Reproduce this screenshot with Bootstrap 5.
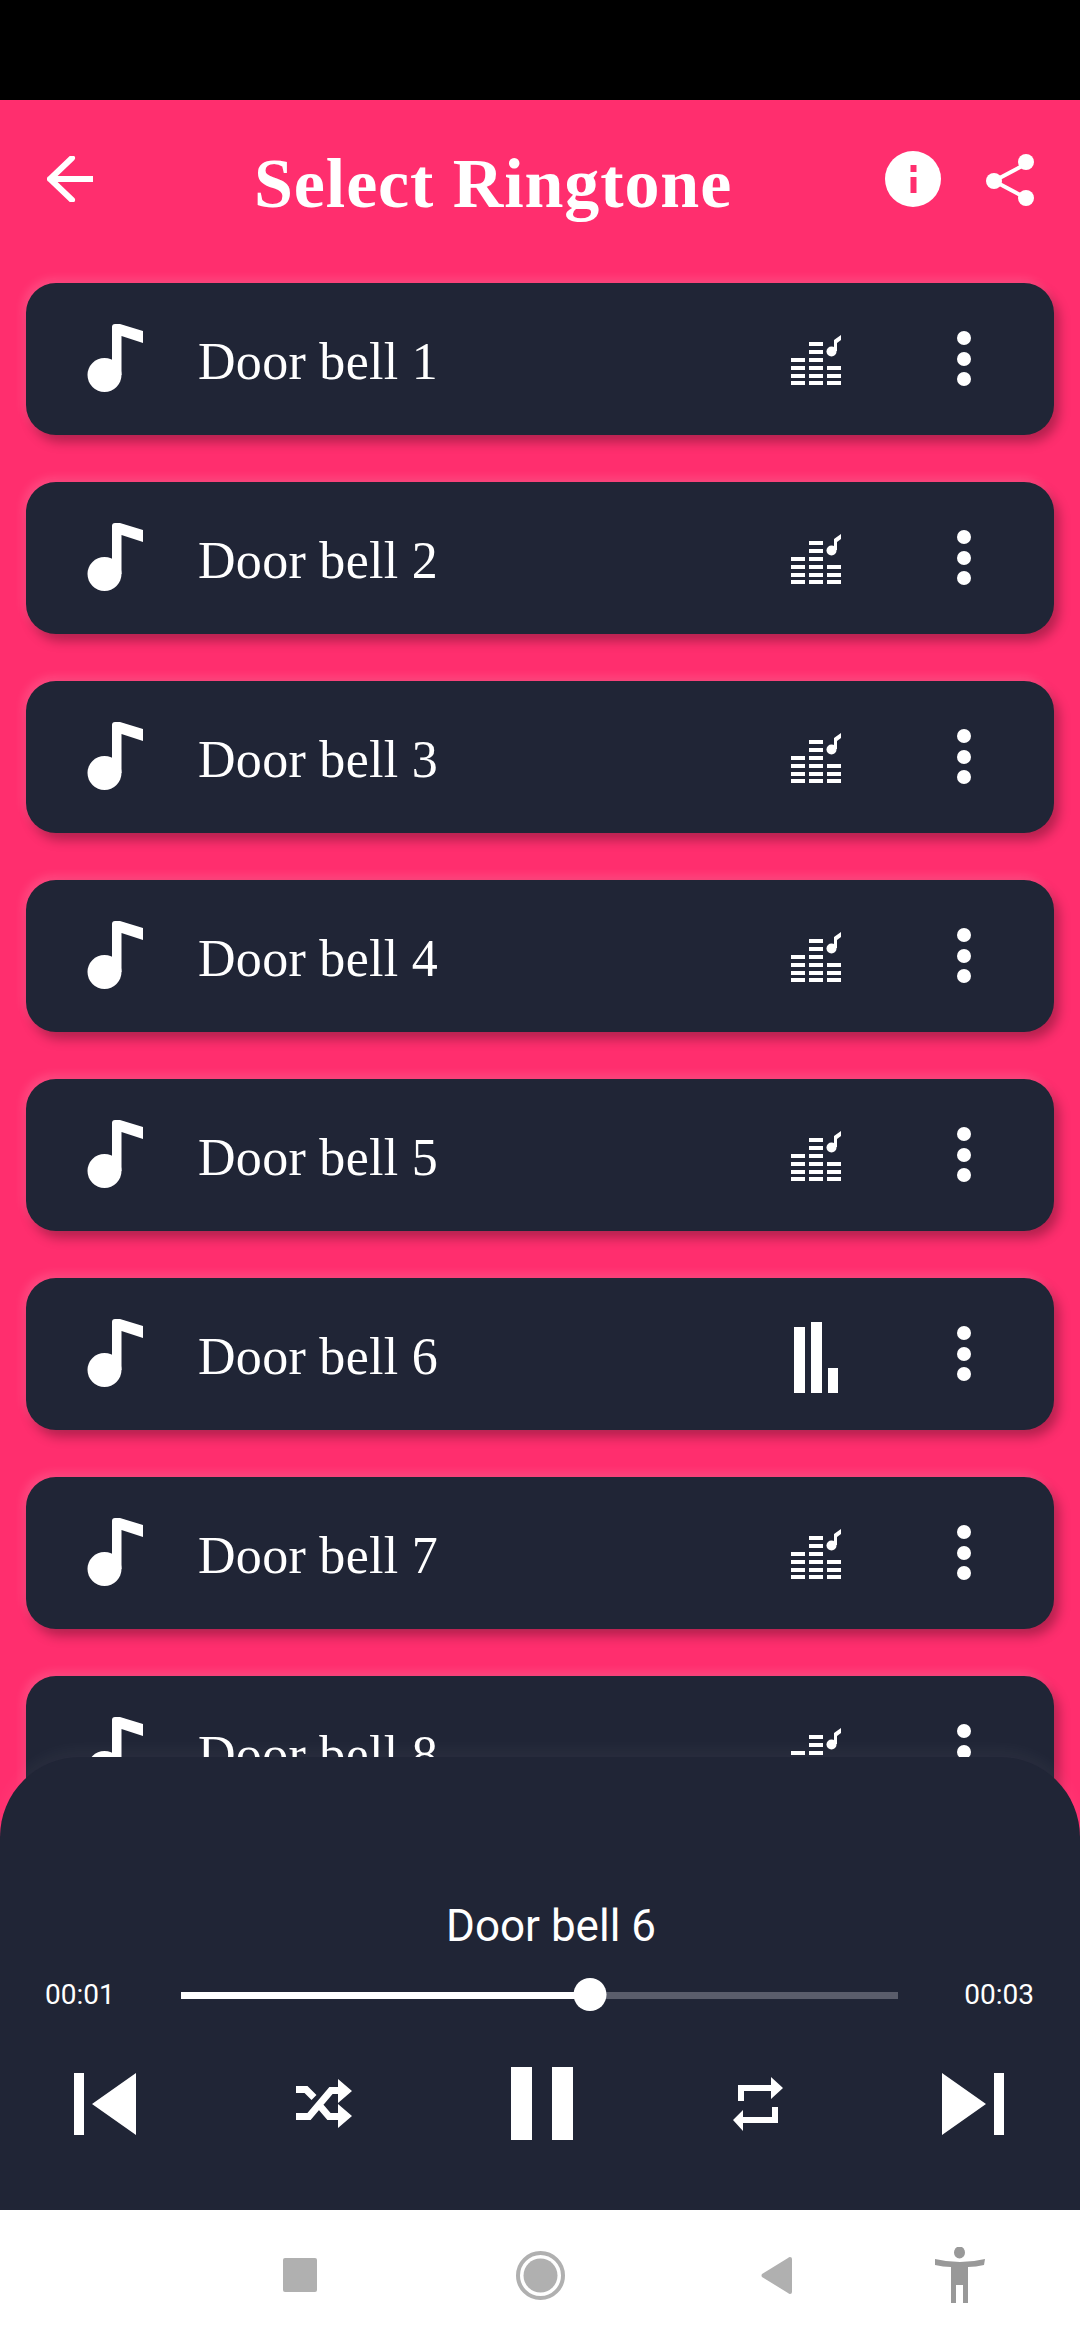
<!DOCTYPE html>
<html lang="en">
<head>
    <meta charset="UTF-8">
    <meta name="viewport" content="width=device-width, initial-scale=1.0">
    <title>Select Ringtone</title>
    <link href="https://cdn.jsdelivr.net/npm/bootstrap@5.3.0/dist/css/bootstrap.min.css" rel="stylesheet">
    <style>
        body { width: 1080px; height: 2340px; background: #000; overflow: hidden; }
        .status-strip { height: 100px; background: #000; }
        .screen { background: #ff2e6e; height: 2110px; overflow: hidden; }
        .app-head { height: 183px; padding: 0 46px 0 47px; }
        .app-title { font-family: "Liberation Serif", serif; font-weight: 700; font-size: 70px; letter-spacing: .9px; color: #fff; margin: 0 0 16px 161px; line-height: 1; width: 476px; flex: none; }
        .head-back, .head-info, .head-share { flex: none; margin-bottom: 25px; }
        .head-info { margin-left: 155px; }
        .head-share { margin-left: 45px; margin-bottom: 23px; }

        .tone-list { gap: 47px; padding: 0 26px; }
        .tone-row { height: 152px; background: #202536; border-radius: 30px; box-shadow: 5px 7px 12px rgba(0, 0, 0, .3), -3px -4px 10px rgba(255, 255, 255, .14); padding-right: 83px; }
        .tone-note { margin-left: 61px; margin-bottom: 3px; flex: none; }
        .tone-name { font-family: "Liberation Serif", serif; font-size: 52px; letter-spacing: .3px; color: #fff; margin-left: 55px; padding-top: 5px; }
        .tone-dots { margin-left: 116px; flex: none; }
        .tone-playing { margin-top: 7px; }

        .player { height: 453px; background: #202536; border-radius: 80px 80px 0 0; padding-top: 144px; box-shadow: 0 -8px 16px rgba(255, 255, 255, .04); font-family: Roboto, sans-serif; color: #fff; }
        .player-name { font-size: 44px; line-height: 50px; padding-left: 22px; }
        .seek-row { height: 34px; margin-top: 27px; padding: 0 46px 0 45px; font-size: 28px; }
        .seek-time { width: 136px; flex: none; }
        .seek-track { height: 34px; }
        .seek-track .progress { height: 7px; width: 100%; border-radius: 0; background: #5a5d6b; }
        .seek-track .progress-bar { background: #fff; }
        .seek-thumb { width: 33px; height: 33px; border-radius: 50%; background: #fff; top: 0; transform: translateX(-50%); }
        .transport { height: 73px; margin-top: 55px; padding: 0 76px 0 74px; }

        .sys-nav { height: 130px; background: #fff; }
        .sys-nav svg { position: absolute; }
    </style>
</head>
<body>
    <svg width="0" height="0" class="d-block">
        <symbol id="i-note" viewBox="0 0 56 69">
            <circle cx="17.5" cy="52" r="17"/>
            <path d="M25 52V4q0-3 3-3h5l23 7v12L34.500 13V52z"/>
        </symbol>
        <symbol id="i-eq" viewBox="0 0 50 51">
            <path d="M0 24h14v4H0zM0 32h14v4H0zM0 40h14v4H0zM0 47h14v4H0z"/>
            <path d="M18 8h14v4H18zM18 16h14v4H18zM18 24h14v4H18zM18 32h14v4H18zM18 40h14v4H18zM18 47h14v4H18z"/>
            <path d="M36 32h14v4H36zM36 40h14v4H36zM36 47h14v4H36z"/>
            <circle cx="40.500" cy="17.500" r="5"/>
            <path d="M43 17V6l7-5v5l-4 3v8z"/>
        </symbol>
        <symbol id="i-dots" viewBox="0 0 14 56">
            <circle cx="7" cy="7" r="7"/><circle cx="7" cy="28" r="7"/><circle cx="7" cy="48" r="7"/>
        </symbol>
    </svg>

    <div class="status-strip"></div>

    <div class="screen position-relative">
        <header class="app-head d-flex align-items-center">
            <svg class="head-back" width="46" height="46" viewBox="0 0 46 46" fill="none" stroke="#fff" stroke-width="6" stroke-linecap="round" stroke-linejoin="miter"><path d="M46 23H3M25 2 3 23l22 21"/></svg>
            <h1 class="app-title text-nowrap">Select Ringtone</h1>
            <svg class="head-info" width="56" height="56" viewBox="0 0 56 56"><circle cx="28" cy="28" r="28" fill="#fff"/><path d="M25.500 14h6v7h-6zM25.500 26h6v16h-6z" fill="#ff2e6e"/></svg>
            <svg class="head-share" width="48" height="52" viewBox="0 0 48 52" fill="#fff"><path d="M40 10 8 27l32 17" fill="none" stroke="#fff" stroke-width="4"/><circle cx="40" cy="8" r="8"/><circle cx="8" cy="27" r="8"/><circle cx="40" cy="44" r="8"/></svg>
        </header>

        <div class="tone-list d-flex flex-column">
            <div class="tone-row d-flex align-items-center flex-none">
                <svg class="tone-note" width="56" height="69" fill="#fff"><use href="#i-note"/></svg>
                <span class="tone-name flex-grow-1">Door bell 1</span>
                <svg width="50" height="51" fill="#fff"><use href="#i-eq"/></svg>
                <svg class="tone-dots" width="14" height="56" fill="#fff"><use href="#i-dots"/></svg>
            </div>
            <div class="tone-row d-flex align-items-center flex-none">
                <svg class="tone-note" width="56" height="69" fill="#fff"><use href="#i-note"/></svg>
                <span class="tone-name flex-grow-1">Door bell 2</span>
                <svg width="50" height="51" fill="#fff"><use href="#i-eq"/></svg>
                <svg class="tone-dots" width="14" height="56" fill="#fff"><use href="#i-dots"/></svg>
            </div>
            <div class="tone-row d-flex align-items-center flex-none">
                <svg class="tone-note" width="56" height="69" fill="#fff"><use href="#i-note"/></svg>
                <span class="tone-name flex-grow-1">Door bell 3</span>
                <svg width="50" height="51" fill="#fff"><use href="#i-eq"/></svg>
                <svg class="tone-dots" width="14" height="56" fill="#fff"><use href="#i-dots"/></svg>
            </div>
            <div class="tone-row d-flex align-items-center flex-none">
                <svg class="tone-note" width="56" height="69" fill="#fff"><use href="#i-note"/></svg>
                <span class="tone-name flex-grow-1">Door bell 4</span>
                <svg width="50" height="51" fill="#fff"><use href="#i-eq"/></svg>
                <svg class="tone-dots" width="14" height="56" fill="#fff"><use href="#i-dots"/></svg>
            </div>
            <div class="tone-row d-flex align-items-center flex-none">
                <svg class="tone-note" width="56" height="69" fill="#fff"><use href="#i-note"/></svg>
                <span class="tone-name flex-grow-1">Door bell 5</span>
                <svg width="50" height="51" fill="#fff"><use href="#i-eq"/></svg>
                <svg class="tone-dots" width="14" height="56" fill="#fff"><use href="#i-dots"/></svg>
            </div>
            <div class="tone-row d-flex align-items-center flex-none">
                <svg class="tone-note" width="56" height="69" fill="#fff"><use href="#i-note"/></svg>
                <span class="tone-name flex-grow-1">Door bell 6</span>
                <svg class="tone-playing" width="50" height="71" viewBox="0 0 50 71" fill="#fff"><path d="M3 5h11v66H3zM20 0h11v71H20zM37 46h10v25H37z"/></svg>
                <svg class="tone-dots" width="14" height="56" fill="#fff"><use href="#i-dots"/></svg>
            </div>
            <div class="tone-row d-flex align-items-center flex-none">
                <svg class="tone-note" width="56" height="69" fill="#fff"><use href="#i-note"/></svg>
                <span class="tone-name flex-grow-1">Door bell 7</span>
                <svg width="50" height="51" fill="#fff"><use href="#i-eq"/></svg>
                <svg class="tone-dots" width="14" height="56" fill="#fff"><use href="#i-dots"/></svg>
            </div>
            <div class="tone-row d-flex align-items-center flex-none">
                <svg class="tone-note" width="56" height="69" fill="#fff"><use href="#i-note"/></svg>
                <span class="tone-name flex-grow-1">Door bell 8</span>
                <svg width="50" height="51" fill="#fff"><use href="#i-eq"/></svg>
                <svg class="tone-dots" width="14" height="56" fill="#fff"><use href="#i-dots"/></svg>
            </div>
        </div>

        <!-- player sheet lies over the list -->
        <div class="player position-absolute bottom-0 start-0 w-100">
            <div class="player-name text-center">Door bell 6</div>
            <div class="seek-row d-flex align-items-center">
                <span class="seek-time">00:01</span>
                <div class="seek-track position-relative flex-grow-1 d-flex align-items-center">
                    <div class="progress"><div class="progress-bar" style="width: 57%"></div></div>
                    <div class="seek-thumb position-absolute" style="left: 57%"></div>
                </div>
                <span class="seek-time text-end">00:03</span>
            </div>
            <div class="transport d-flex justify-content-between align-items-center">
                <svg width="62" height="62" viewBox="0 0 62 62" fill="#fff"><path d="M0 0h10v62H0zM62 0v62L18 31z"/></svg>
                <svg width="56" height="49" viewBox="0 0 56 49" fill="none" stroke="#fff" stroke-width="7"><path d="M0 37.500h13L35 11.500h9M0 10.500h10l8 8M24 27l9 10.500h11"/><path d="M42 0 56 12 42 24zM42 25l14 12-14 12z" fill="#fff" stroke="none"/></svg>
                <svg width="62" height="73" viewBox="0 0 62 73" fill="#fff"><path d="M0 0h21v73H0zM41 0h21v73H41z"/></svg>
                <svg width="50" height="54" viewBox="0 0 50 54" fill="none" stroke="#fff" stroke-width="6"><path d="M8 24V11h32M42 30v13H8"/><path d="M38 0l12 11-12 11zM10 33v21L0 43z" fill="#fff" stroke="none"/></svg>
                <svg width="62" height="62" viewBox="0 0 62 62" fill="#fff"><path d="M52 0h10v62H52zM0 0v62l44-31z"/></svg>
            </div>
        </div>
    </div>

    <nav class="sys-nav position-relative">
        <svg style="left:283px;top:48px" width="34" height="34" viewBox="0 0 34 34"><rect width="34" height="34" rx="2" fill="#b0b0b0"/></svg>
        <svg style="left:516px;top:41px" width="49" height="49" viewBox="0 0 49 49"><circle cx="24.500" cy="24.500" r="22.500" fill="none" stroke="#b0b0b0" stroke-width="4"/><circle cx="24.500" cy="24.500" r="17" fill="#b0b0b0"/></svg>
        <svg style="left:761px;top:47px" width="31" height="37" viewBox="0 0 31 37"><path d="M29 0q2 0 2 2v33q0 2-2 2-1 0-2-1L1 20q-1-1.500 0-3L27 1q1-1 2-1z" fill="#b0b0b0"/></svg>
        <svg style="left:935px;top:37px" width="50" height="56" viewBox="0 0 50 56" fill="#999"><ellipse cx="24.500" cy="5.500" rx="5.500" ry="6"/><path d="M0 12q12 3 25 3t25-3l-1 6q-8 2-16 2v36h-5V38h-7v18h-5V20q-8 0-16-2z"/></svg>
    </nav>

    <script src="https://cdn.jsdelivr.net/npm/bootstrap@5.3.0/dist/js/bootstrap.bundle.min.js"></script>
</body>
</html>
